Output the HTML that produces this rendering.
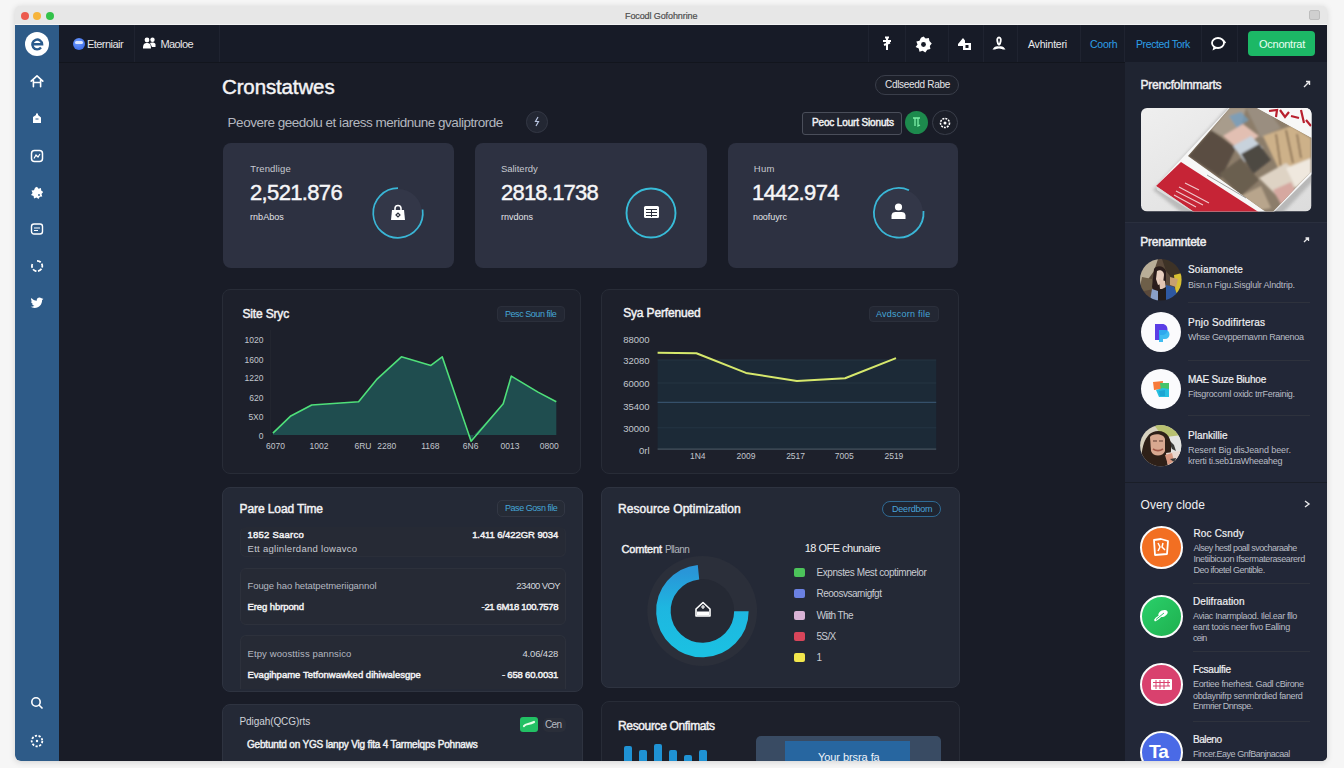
<!DOCTYPE html>
<html><head><meta charset="utf-8">
<style>
*{margin:0;padding:0;box-sizing:border-box}
html,body{width:1344px;height:768px;overflow:hidden;background:#f6f6f6;font-family:"Liberation Sans",sans-serif;position:relative}
.a{position:absolute}
.t{position:absolute;white-space:nowrap;line-height:1}
.b{font-weight:bold}
.m{-webkit-text-stroke:0.45px currentColor}
.m3{-webkit-text-stroke:0.2px currentColor}
.m2{-webkit-text-stroke:0.45px currentColor}
svg{position:absolute;overflow:visible}
#win{position:absolute;left:15px;top:6px;width:1312px;height:755px;border-radius:5px;overflow:hidden;background:#e8e8e8;box-shadow:0 1px 6px rgba(0,0,0,.15)}
.vs{position:absolute;top:25px;width:1px;height:37px;background:#1f2330}
.card{position:absolute;border-radius:8px}
</style></head><body>
<div id="win"></div>
<div class="a" style="left:0;top:0;width:1344px;height:768px;clip-path:inset(6px 17px 7px 15px round 5px)">
<!-- title bar -->
<div class="a" style="left:15px;top:6px;width:1312px;height:19px;background:#e7e7e7;border-radius:5px 5px 0 0;border-bottom:1px solid #f4f4f4"></div>
<div class="a" style="left:21px;top:11.5px;width:8px;height:8px;border-radius:50%;background:#ec5a4e"></div>
<div class="a" style="left:33px;top:11.5px;width:8px;height:8px;border-radius:50%;background:#f6b43b"></div>
<div class="a" style="left:46px;top:11.5px;width:8px;height:8px;border-radius:50%;background:#33c24a"></div>
<div class="t m3" style="left:625px;top:12px;font-size:9px;color:#4e4e4e;letter-spacing:-0.1px">Focodl Gofohnrine</div>
<div class="a" style="left:1309px;top:10px;width:11px;height:10px;border-radius:2px;background:#cfcfcf;border:1px solid #bdbdbd"></div>

<div class="a" style="left:59px;top:25px;width:1268px;height:736px;background:#191c27"></div>
<!-- sidebar -->
<div class="a" style="left:15px;top:25px;width:44px;height:736px;background:#2e5b88;border-radius:0 0 0 6px"></div>

<!-- header -->
<div class="a" style="left:59px;top:25px;width:1268px;height:38px;background:#171b27;border-bottom:1px solid #12151d"></div>
<div class="vs" style="left:134px"></div>
<div class="vs" style="left:219px"></div>
<div class="vs" style="left:868px"></div>
<div class="vs" style="left:905px"></div>
<div class="vs" style="left:948px"></div>
<div class="vs" style="left:983px"></div>
<div class="vs" style="left:1017px"></div>
<div class="vs" style="left:1080px"></div>
<div class="vs" style="left:1124px"></div>
<div class="vs" style="left:1201px"></div>
<div class="vs" style="left:1237px"></div>


<!-- sidebar content -->
<div class="a" style="left:24.5px;top:31.75px;width:24px;height:24px;border-radius:50%;background:#fff"></div>
<svg style="left:24.5px;top:31.75px" width="24" height="24" viewBox="0 0 24 24"><path d="M7.3 12.3 H17.1 A4.9 4.9 0 1 0 16 15.6" stroke="#2a5a8c" stroke-width="2.4" fill="none"/></svg>
<svg style="left:30px;top:74px" width="14" height="14" viewBox="0 0 14 14"><path d="M1.2 7.2 L7 1.8 L12.8 7.2 M3.4 6 V12.8 M10.6 6 V12.8 M3.4 8.5 H10.6" stroke="#fff" stroke-width="1.6" fill="none" stroke-linejoin="round" stroke-linecap="round"/></svg>
<svg style="left:31px;top:112px" width="12" height="12" viewBox="0 0 12 12"><path d="M2 11 V5 L5 3 V1.5 H7 V3 L10 5.5 V11 Z" fill="#fff"/><path d="M4.5 7 h3" stroke="#2e5b88" stroke-width="1"/></svg>
<svg style="left:30px;top:149px" width="14" height="14" viewBox="0 0 14 14"><rect x="1.5" y="1.5" width="11" height="11" rx="3" stroke="#fff" stroke-width="1.5" fill="none"/><path d="M4 9.5 L6 6 L8 8 L10 5" stroke="#fff" stroke-width="1.2" fill="none"/></svg>
<svg style="left:30px;top:186px" width="14" height="14" viewBox="0 0 14 14"><path d="M7 0.8 L8.5 2.8 L11 2 L11.2 4.5 L13.2 6 L11.5 8 L12.3 10.5 L9.8 10.8 L8.5 13 L6.5 11.5 L4 12.5 L3.6 10 L1 9 L2.6 7 L1.5 4.5 L4 4.2 L5 1.8 Z" fill="#fff"/><circle cx="9" cy="9" r="0.9" fill="#2e5b88"/></svg>
<svg style="left:30px;top:222px" width="14" height="14" viewBox="0 0 14 14"><rect x="1.5" y="2" width="11" height="10" rx="2.5" stroke="#fff" stroke-width="1.4" fill="none"/><path d="M4 6 H10 M4 8.5 H8" stroke="#fff" stroke-width="1.2"/></svg>
<svg style="left:30px;top:259px" width="14" height="14" viewBox="0 0 14 14"><path d="M7 1.8 A5.2 5.2 0 1 1 2.3 5" stroke="#fff" stroke-width="1.8" fill="none" stroke-dasharray="4 1.5"/></svg>
<svg style="left:30px;top:296px" width="14" height="14" viewBox="0 0 24 24"><path d="M23 4.6c-.8.4-1.7.6-2.6.7.9-.6 1.7-1.5 2-2.5-.9.5-1.9.9-2.9 1.1C18.6 3 17.4 2.5 16.1 2.5c-2.5 0-4.5 2-4.5 4.5 0 .4 0 .7.1 1C7.9 7.8 4.6 6 2.4 3.3 2 4 1.8 4.8 1.8 5.6c0 1.6.8 2.9 2 3.8-.7 0-1.4-.2-2-.6v.1c0 2.2 1.6 4 3.6 4.4-.4.1-.8.2-1.2.2-.3 0-.6 0-.8-.1.6 1.8 2.2 3.1 4.2 3.1-1.5 1.2-3.5 1.9-5.6 1.9H1c2 1.3 4.4 2 6.9 2 8.3 0 12.8-6.9 12.8-12.8v-.6c.9-.6 1.7-1.4 2.3-2.4z" fill="#fff"/></svg>
<svg style="left:30px;top:696px" width="14" height="14" viewBox="0 0 14 14"><circle cx="6" cy="6" r="4.2" stroke="#fff" stroke-width="1.6" fill="none"/><path d="M9 9 L12.5 12.5" stroke="#fff" stroke-width="1.6"/></svg>
<svg style="left:30px;top:734px" width="14" height="14" viewBox="0 0 14 14"><circle cx="7" cy="7" r="5.3" stroke="#fff" stroke-width="1.8" fill="none" stroke-dasharray="2.2 1.5"/><circle cx="7" cy="7" r="1.2" fill="#fff"/></svg>

<!-- header content -->
<div class="a" style="left:73px;top:37.5px;width:12px;height:12px;border-radius:50%;background:radial-gradient(circle at 40% 35%,#6e9cff,#2f5fe0)"></div>
<div class="a" style="left:75px;top:41px;width:8px;height:3px;border-radius:2px;background:#d8e4ff"></div>
<div class="t" id="h1" style="left:87px;top:39px;font-size:11px;color:#e6e6e8;letter-spacing:-0.55px">Eterniair</div>
<svg style="left:143px;top:37px" width="13" height="12" viewBox="0 0 13 12"><circle cx="4" cy="3" r="2.4" fill="#fff"/><circle cx="9.5" cy="2.8" r="2.2" fill="#fff"/><path d="M0 11.5 C0 7 1.5 6 4 6 C6.5 6 8 7 8 11.5 Z M7 6 C8 5.5 11 5 12.5 7 V10 H9 Z" fill="#fff"/></svg>
<div class="t" id="h2" style="left:160.5px;top:39px;font-size:11px;color:#e6e6e8;letter-spacing:-0.6px">Maoloe</div>

<svg style="left:880px;top:36px" width="14" height="15" viewBox="0 0 14 15"><path d="M7 1 V14 M3 5 H11 M4 9 L10 6.5 M5 1.5 L9 1.5" stroke="#fff" stroke-width="2" fill="none"/></svg>
<svg style="left:915px;top:35.5px" width="17" height="17" viewBox="0 0 14 14"><path d="M7 0.4 L8.8 2.1 L11.4 1.6 L11.9 4.2 L13.8 6.1 L12.2 8.2 L12.7 10.8 L10.1 11.3 L8.5 13.6 L6.3 12.1 L3.7 12.9 L3.1 10.3 L0.5 9.1 L2.1 7 L1.1 4.5 L3.7 3.9 L4.9 1.5 Z" fill="#fff"/><circle cx="7" cy="7" r="2" fill="#171b27"/></svg>
<svg style="left:957px;top:36px" width="15" height="15" viewBox="0 0 15 15"><path d="M1 8 L6 2 L8 4.5 V7 H14 V14 H6 V10 H1 Z" fill="#fff"/><rect x="8.5" y="9" width="3" height="3" fill="#161922"/></svg>
<svg style="left:991px;top:36px" width="16" height="15" viewBox="0 0 16 15"><path d="M8 1.5 C6.5 1.5 6 3 6.3 5 C6.6 7 7.5 8.5 8 9" stroke="#fff" stroke-width="1.8" fill="none"/><path d="M8 1.5 C9.5 1.5 10 3 9.7 5 C9.4 7 8.5 8.5 8 9" stroke="#fff" stroke-width="1.8" fill="none"/><path d="M1.5 13.5 C3 10.5 5.5 9.5 8 10.5 C10.5 9.5 13 10.5 14.5 13.5 C12 14 10 12.5 8 12.5 C6 12.5 4 14 1.5 13.5 Z" fill="#fff"/></svg>
<div class="t" id="h3" style="left:1028px;top:38.5px;font-size:10.5px;color:#ececee;letter-spacing:-0.19px">Avhinteri</div>
<div class="t" id="h4" style="left:1090px;top:38.5px;font-size:10.5px;color:#2d9fe8;letter-spacing:-0.26px">Coorh</div>
<div class="t" id="h5" style="left:1136px;top:38.5px;font-size:10.5px;color:#2d9fe8;letter-spacing:-0.4px">Prected Tork</div>
<svg style="left:1210px;top:35.5px" width="17" height="16" viewBox="0 0 17 16"><ellipse cx="8" cy="7" rx="6" ry="5" stroke="#fff" stroke-width="1.8" fill="none"/><path d="M3.5 11 L2.5 14.5 L7 12.2" fill="#fff"/><path d="M13 4 L15.5 7" stroke="#fff" stroke-width="1.5"/></svg>
<div class="a" style="left:1248px;top:30.8px;width:67px;height:25px;border-radius:4px;background:#1cb866"></div>
<div class="t" id="h6" style="left:1259px;top:38.5px;font-size:11px;color:#eafff2;letter-spacing:-0.26px">Ocnontrat</div>

<!-- main title area -->
<div class="t m" id="m1" style="left:222px;top:77.4px;font-size:20.5px;color:#f4f4f6;letter-spacing:-0.13px">Cronstatwes</div>
<div class="t" id="m2" style="left:227.6px;top:116.1px;font-size:13.5px;color:#b3b7bf;letter-spacing:-0.49px">Peovere geedolu et iaress meridnune gvaliptrorde</div>
<div class="a" style="left:526.3px;top:111.3px;width:21.4px;height:21.4px;border-radius:50%;background:#232733;border:1px solid #343845"></div>
<svg style="left:532px;top:116px" width="10" height="11" viewBox="0 0 10 11"><path d="M6 1 L3.5 5.5 H6.5 L4 10" stroke="#b8c4e0" stroke-width="1.2" fill="none"/></svg>
<div class="a" style="left:875px;top:75px;width:84px;height:19.5px;border-radius:10px;background:#1c1f29;border:1px solid #3a3e4a"></div>
<div class="t" id="m3" style="left:885px;top:80px;font-size:10px;color:#e4e4e8;letter-spacing:-0.3px">Cdlseedd Rabe</div>
<div class="a" style="left:802px;top:111.6px;width:100px;height:23px;border-radius:3px;background:#20232e;border:1px solid #4a4e5a"></div>
<div class="t m" id="m4" style="left:812px;top:118px;font-size:10px;color:#f0f0f2;letter-spacing:-0.15px">Peoc Lourt Sionuts</div>
<div class="a" style="left:904.8px;top:110.8px;width:23.6px;height:23.6px;border-radius:50%;background:#1d8a4d"></div>
<svg style="left:911px;top:116px" width="11" height="12" viewBox="0 0 11 12"><path d="M2 2 H9 M4 2 V10 M7 2 V10 L9 9" stroke="#7df0a8" stroke-width="1.3" fill="none"/></svg>
<div class="a" style="left:932.3px;top:109.9px;width:25.4px;height:25.4px;border-radius:50%;background:#1b1e28;border:1px solid #3a3e4a"></div>
<svg style="left:939px;top:117px" width="12" height="12" viewBox="0 0 12 12"><circle cx="6" cy="6" r="4.5" stroke="#fff" stroke-width="1.6" fill="none" stroke-dasharray="2 1"/><circle cx="6" cy="6" r="1.5" fill="#fff"/></svg>


<!-- stat cards -->
<div class="card" style="left:222.8px;top:143.4px;width:231.2px;height:124.2px;background:#2d3141"></div>
<div class="card" style="left:475.2px;top:143.4px;width:231.6px;height:124.2px;background:#2d3141"></div>
<div class="card" style="left:727.6px;top:143.4px;width:230.1px;height:124.2px;background:#2d3141"></div>

<div class="t" id="s1a" style="left:250.3px;top:164.2px;font-size:9.5px;color:#c6c9d0;letter-spacing:0.15px">Trendlige</div>
<div class="t m2" id="s1b" style="left:250px;top:181.9px;font-size:22px;color:#f6f6f8;letter-spacing:-0.65px">2,521.876</div>
<div class="t" id="s1c" style="left:250px;top:212.5px;font-size:9px;color:#e2e4e8;letter-spacing:0.04px">rnbAbos</div>
<div class="t" id="s2a" style="left:500.9px;top:164.2px;font-size:9.5px;color:#c6c9d0;letter-spacing:0.0px">Saliterdy</div>
<div class="t m2" id="s2b" style="left:501px;top:181.9px;font-size:22px;color:#f6f6f8;letter-spacing:-0.78px">2818.1738</div>
<div class="t" id="s2c" style="left:501px;top:212.5px;font-size:9px;color:#e2e4e8;letter-spacing:-0.0px">rnvdons</div>
<div class="t" id="s3a" style="left:753.7px;top:164.2px;font-size:9.5px;color:#c6c9d0;letter-spacing:0.38px">Hum</div>
<div class="t m2" id="s3b" style="left:752px;top:181.9px;font-size:22px;color:#f6f6f8;letter-spacing:-0.6px">1442.974</div>
<div class="t" id="s3c" style="left:753px;top:212.5px;font-size:9px;color:#e2e4e8;letter-spacing:-0.07px">noofuyrc</div>

<svg style="left:371.8px;top:186.75px" width="52" height="52" viewBox="0 0 52 52"><circle cx="26" cy="26" r="24" fill="#333748"/><path d="M26 1.2 A24.8 24.8 0 1 0 50.56 22.5" stroke="#3ab6d6" stroke-width="1.7" fill="none"/></svg>
<svg style="left:389.5px;top:203.5px" width="16" height="17" viewBox="0 0 16 17"><path d="M5 6 V4.5 A3 3 0 0 1 11 4.5 V6" stroke="#fff" stroke-width="1.6" fill="none"/><path d="M2 6 H14 L15 16 H1 Z" fill="#fff"/><path d="M6 11 L8 9 L10 11 L8 13 Z" stroke="#2b2f3c" stroke-width="1.2" fill="none"/></svg>
<svg style="left:625px;top:186.75px" width="52" height="52" viewBox="0 0 52 52"><circle cx="26" cy="26" r="24.5" fill="#333748" stroke="#38bcd8" stroke-width="1.9"/></svg>
<svg style="left:643px;top:205px" width="17" height="15" viewBox="0 0 17 15"><rect x="1" y="1" width="15" height="12" rx="1.5" fill="#fff"/><path d="M3 4.5 H14 M3 7.5 H14 M3 10.5 H14 M8.5 4 V12" stroke="#2b2f3c" stroke-width="1"/></svg>
<svg style="left:873px;top:186.75px" width="52" height="52" viewBox="0 0 52 52"><circle cx="26" cy="26" r="24" fill="#333748"/><path d="M36 3.2 A24.8 24.8 0 1 0 50.5 24" stroke="#3ab6d6" stroke-width="1.8" fill="none"/></svg>
<svg style="left:890px;top:202px" width="17" height="18" viewBox="0 0 17 18"><circle cx="8.5" cy="5" r="3.6" fill="#fff"/><path d="M1.5 17 V13.5 C1.5 11 3.5 10 5.5 10 H11.5 C13.5 10 15.5 11 15.5 13.5 V17 Z" fill="#fff"/></svg>

<!-- chart cards -->
<div class="card" style="left:222.4px;top:288.8px;width:358.6px;height:185.5px;background:#1d202b;border:1px solid #282c37"></div>
<div class="card" style="left:601.4px;top:288.8px;width:358.1px;height:185.5px;background:#1d202b;border:1px solid #282c37"></div>
<div class="t m" id="c1t" style="left:242.5px;top:307.8px;font-size:12px;color:#f2f2f4;letter-spacing:-0.17px">Site Sryc</div>
<div class="a" style="left:496.5px;top:305.5px;width:68px;height:16px;border-radius:4px;background:#232733;border:1px solid #2b2f3b"></div>
<div class="t" id="c1b" style="left:505px;top:309.5px;font-size:9px;color:#45a6d6;letter-spacing:-0.45px">Pesc Soun file</div>
<div class="t m" id="c2t" style="left:623.2px;top:307.1px;font-size:12px;color:#f2f2f4;letter-spacing:-0.16px">Sya Perfenued</div>
<div class="a" style="left:868.7px;top:306px;width:70.5px;height:16px;border-radius:4px;background:#232733;border:1px solid #2b2f3b"></div>
<div class="t" id="c2b" style="left:876px;top:310px;font-size:9px;color:#45a6d6;letter-spacing:0.24px">Avdscorn file</div>

<div class="a" style="left:270px;top:330px;width:1px;height:106px;background:#22252f"></div>
<svg style="left:0;top:0" width="1344" height="768">
  <path d="M272.9 433.1 L290.3 416.3 L311.7 405 L358.6 401.8 L377.3 378.8 L401.4 356.8 L430.9 365.4 L442.2 356.8 L468 435 L471.1 441.2 L474 435 L503.2 403.7 L511.3 376.1 L538 392.1 L556.3 401.8 L556.3 435 L272.9 435 Z" fill="#1f4d4f"/>
  <path d="M272.9 433.1 L290.3 416.3 L311.7 405 L358.6 401.8 L377.3 378.8 L401.4 356.8 L430.9 365.4 L442.2 356.8 L471.1 441.2 L503.2 403.7 L511.3 376.1 L538 392.1 L556.3 401.8" stroke="#4fe07a" stroke-width="1.6" fill="none" stroke-linejoin="round"/>
  <rect x="657.6" y="360" width="278.6" height="89.2" fill="#1c2a37"/>
  <path d="M657.6 360 H936.2 M657.6 383 H936.2 M657.6 427.8 H936.2" stroke="#243543" stroke-width="1"/>
  <path d="M657.6 402.3 H936.2" stroke="#35506a" stroke-width="1.3"/>
  <path d="M657.6 449.2 H936.2" stroke="#45525e" stroke-width="1.2"/>
  <path d="M657.6 352.8 L696.4 353.3 L746 372.9 L796.9 380.9 L845.1 378.2 L896 358.1" stroke="#d6e86c" stroke-width="2" fill="none" stroke-linejoin="round"/>
</svg>
<div class="a" style="left:232px;top:336px;width:31.5px;font-size:8.5px;color:#c2c6cd;line-height:1;text-align:right">
 <div class="t" style="right:0;top:0.4px">1020</div>
 <div class="t" style="right:0;top:19.7px">1600</div>
 <div class="t" style="right:0;top:38.4px">1220</div>
 <div class="t" style="right:0;top:57.7px">620</div>
 <div class="t" style="right:0;top:76.5px">5X0</div>
 <div class="t" style="right:0;top:96px">0</div>
</div>

<div class="t" style="left:275.5px;top:442.4px;font-size:8.5px;color:#c2c6cd;transform:translateX(-50%)">6070</div>
<div class="t" style="left:319px;top:442.4px;font-size:8.5px;color:#c2c6cd;transform:translateX(-50%)">1002</div>
<div class="t" style="left:363px;top:442.4px;font-size:8.5px;color:#c2c6cd;transform:translateX(-50%)">6RU</div>
<div class="t" style="left:386.7px;top:442.4px;font-size:8.5px;color:#c2c6cd;transform:translateX(-50%)">2280</div>
<div class="t" style="left:430.4px;top:442.4px;font-size:8.5px;color:#c2c6cd;transform:translateX(-50%)">1168</div>
<div class="t" style="left:470.6px;top:442.4px;font-size:8.5px;color:#c2c6cd;transform:translateX(-50%)">6N6</div>
<div class="t" style="left:510px;top:442.4px;font-size:8.5px;color:#c2c6cd;transform:translateX(-50%)">0013</div>
<div class="t" style="left:549.3px;top:442.4px;font-size:8.5px;color:#c2c6cd;transform:translateX(-50%)">0800</div>
<div class="t" style="left:697.8px;top:452.29999999999995px;font-size:8.5px;color:#c2c6cd;transform:translateX(-50%)">1N4</div>
<div class="t" style="left:746px;top:452.29999999999995px;font-size:8.5px;color:#c2c6cd;transform:translateX(-50%)">2009</div>
<div class="t" style="left:795.6px;top:452.29999999999995px;font-size:8.5px;color:#c2c6cd;transform:translateX(-50%)">2517</div>
<div class="t" style="left:844.3px;top:452.29999999999995px;font-size:8.5px;color:#c2c6cd;transform:translateX(-50%)">7005</div>
<div class="t" style="left:893.9px;top:452.29999999999995px;font-size:8.5px;color:#c2c6cd;transform:translateX(-50%)">2519</div>
<div class="a" style="left:600px;top:334.8px;width:49.6px;font-size:9.5px;color:#c2c6cd;line-height:1">
 <div class="t" style="right:0;top:0">88000</div>
 <div class="t" style="right:0;top:21.4px">32080</div>
 <div class="t" style="right:0;top:44.2px">60000</div>
 <div class="t" style="right:0;top:66.9px">35400</div>
 <div class="t" style="right:0;top:89.2px">30000</div>
 <div class="t" style="right:0;top:111.1px">0rl</div>
</div>


<!-- row 3 -->
<div class="card" style="left:221.7px;top:486.7px;width:361.3px;height:205.3px;background:#242936;border:1px solid #2e3340"></div>
<div class="t m" id="r1t" style="left:239.5px;top:502.5px;font-size:12px;color:#f2f2f4;letter-spacing:-0.09px">Pare Load Time</div>
<div class="a" style="left:497px;top:500px;width:68px;height:16.5px;border-radius:5px;background:#262b36;border:1px solid #323744"></div>
<div class="t" id="r1b" style="left:505px;top:504.2px;font-size:9px;color:#45a6d6;letter-spacing:-0.45px">Pase Gosn file</div>

<div class="a" style="left:240px;top:527px;width:326px;height:30.2px;border-radius:6px;background:#262a35;border:1px solid #2a2e39;border-top-color:transparent"></div>
<div class="t m" id="p1a" style="left:247.5px;top:529.7px;font-size:9.5px;color:#f2f2f4;letter-spacing:0.24px">1852 Saarco</div>
<div class="t" id="p1b" style="left:247.5px;top:543.8px;font-size:9.5px;color:#c6c9d0;letter-spacing:0.29px">Ett aglinlerdand lowavco</div>
<div class="t m" id="p1c" style="right:785.8px;top:529.7px;font-size:9.5px;color:#f2f2f4;letter-spacing:-0.08px">1.411 6/422GR 9034</div>

<div class="a" style="left:240px;top:568.2px;width:326px;height:57px;border-radius:6px;background:#262a35;border:1px solid #2d313c"></div>
<div class="t" id="p2a" style="left:247.5px;top:581.4px;font-size:9.5px;color:#b4b8c0;letter-spacing:-0.09px">Fouge hao hetatpetmeriigannol</div>
<div class="t m" id="p2b" style="left:247.5px;top:602.4px;font-size:9.5px;color:#f2f2f4;letter-spacing:-0.09px">Ereg hbrpond</div>
<div class="t" id="p2c" style="right:784px;top:581.4px;font-size:9.5px;color:#d4d7dd;letter-spacing:-0.61px">23400 VOY</div>
<div class="t m" id="p2d" style="right:785.8px;top:602.4px;font-size:9.5px;color:#f2f2f4;letter-spacing:-0.34px">-21 6M18 100.7578</div>

<div class="a" style="left:240px;top:635px;width:326px;height:54px;border-radius:6px 6px 0 0;background:#262a35;border:1px solid #2d313c;border-bottom:none"></div>
<div class="t" id="p3a" style="left:247.5px;top:649.4px;font-size:9.5px;color:#b4b8c0;letter-spacing:0.11px">Etpy woosttiss pannsico</div>
<div class="t m" id="p3b" style="left:247.5px;top:669.6px;font-size:9.5px;color:#f2f2f4;letter-spacing:0.01px">Evagihpame Tetfonwawked dihiwalesgpe</div>
<div class="t" id="p3c" style="right:785.8px;top:649.4px;font-size:9.5px;color:#d4d7dd;letter-spacing:-0.15px">4.06/428</div>
<div class="t m" id="p3d" style="right:785.8px;top:669.6px;font-size:9.5px;color:#f2f2f4;letter-spacing:-0.18px">- 658 60.0031</div>

<div class="card" style="left:600.7px;top:487.2px;width:359px;height:200.5px;background:#242936;border:1px solid #2e3340"></div>
<div class="t m" id="r2t" style="left:618px;top:503.4px;font-size:12px;color:#f2f2f4;letter-spacing:0.06px">Resource Optimization</div>
<div class="a" style="left:882px;top:501px;width:59.3px;height:15.5px;border-radius:8px;background:#1f2430;border:1px solid #2f6a94"></div>
<div class="t" id="r2b" style="left:892px;top:504.8px;font-size:9px;color:#4aa3d8;letter-spacing:-0.2px">Deerdbom</div>
<div class="t m" id="r2c" style="left:621.4px;top:543.5px;font-size:11px;color:#f0f0f2;letter-spacing:-0.14px">Comtent <span style="color:#b0b4bc;-webkit-text-stroke:0;font-size:10px;letter-spacing:-0.6px">Pllann</span></div>
<svg style="left:0;top:0" width="1344" height="768">
  <defs><linearGradient id="dg" x1="0" y1="0" x2="0" y2="1"><stop offset="0" stop-color="#2996d8"/><stop offset=".45" stop-color="#1eb6e0"/><stop offset="1" stop-color="#1bc0e2"/></linearGradient></defs>
  <circle cx="702.2" cy="611" r="54.9" fill="#2b2f3a"/>
  <circle cx="702.2" cy="611" r="32" fill="#252934"/>
  <path d="M698.5 572.2 A39 39 0 1 0 741.4 611.2" stroke="url(#dg)" stroke-width="14.5" fill="none"/>
</svg>
<svg style="left:693.5px;top:600px" width="18" height="18" viewBox="0 0 18 18"><path d="M2 9 L9 2.5 L16 9 V16 H2 Z" stroke="#fff" stroke-width="1.6" fill="none" stroke-linejoin="round"/><rect x="3" y="11.5" width="12" height="4" fill="#fff"/><path d="M9 5 V9 M7 7 H11" stroke="#fff" stroke-width="1.2"/></svg>
<div class="t" id="r2d" style="left:804.7px;top:542.8px;font-size:11px;color:#f0f0f2;letter-spacing:-0.51px">18 OFE chunaire</div>
<div class="a" style="left:794px;top:567.9px;width:11px;height:9px;border-radius:2px;background:#4cc35a"></div>
<div class="a" style="left:794px;top:589.4px;width:11px;height:9px;border-radius:2px;background:#6a80e2"></div>
<div class="a" style="left:794px;top:610.9px;width:11px;height:9px;border-radius:2px;background:#d8b2d5"></div>
<div class="a" style="left:794px;top:632.2px;width:11px;height:9px;border-radius:2px;background:#d8455a"></div>
<div class="a" style="left:794px;top:653.2px;width:11px;height:9px;border-radius:2px;background:#f2e64c"></div>
<div class="t" id="l1" style="left:816.4px;top:567.6px;font-size:10px;color:#c9ccd3;letter-spacing:-0.4px">Expnstes Mest coptimnelor</div>
<div class="t" id="l2" style="left:816.4px;top:589.1px;font-size:10px;color:#c9ccd3;letter-spacing:-0.48px">Reoosvsarnigfgt</div>
<div class="t" id="l3" style="left:816.4px;top:610.6px;font-size:10px;color:#c9ccd3;letter-spacing:-0.61px">Wiith The</div>
<div class="t" id="l4" style="left:816.4px;top:631.9px;font-size:10px;color:#c9ccd3;letter-spacing:-0.6px">5S/X</div>
<div class="t" id="l5" style="left:816.4px;top:652.9px;font-size:10px;color:#c9ccd3">1</div>

<!-- row 4 -->
<div class="card" style="left:221.7px;top:704px;width:361px;height:70px;background:#242936;border:1px solid #2e3340"></div>
<div class="t" id="q1t" style="left:239.5px;top:717px;font-size:10px;color:#d0d3d9;letter-spacing:-0.08px">Pdigah(QCG)rts</div>
<div class="t m" id="q1b" style="left:247px;top:740px;font-size:10px;color:#eef0f2;letter-spacing:-0.18px">Gebtuntd on YGS lanpy Vig fita 4 Tarmelqps Pohnaws</div>
<div class="a" style="left:520px;top:716.5px;width:18px;height:15.5px;border-radius:3px;background:#22c064"></div>
<svg style="left:522px;top:719px" width="14" height="11" viewBox="0 0 14 11"><path d="M2 7 C4 4 7 6 12 3" stroke="#e8ffe8" stroke-width="2.2" fill="none" stroke-linecap="round"/></svg>
<div class="a" style="left:542.5px;top:717.9px;width:23.2px;height:14.1px;border-radius:5px;background:#2a2e39"></div>
<div class="t" id="q1c" style="left:545px;top:720.3px;font-size:10px;color:#b9bcc4;letter-spacing:-0.65px">Cen</div>

<div class="card" style="left:601.2px;top:701px;width:358.5px;height:70px;background:#1d202b;border:1px solid #282c37"></div>
<div class="t m" id="q2t" style="left:618px;top:720.2px;font-size:12px;color:#f2f2f4;letter-spacing:-0.35px">Resource Onfimats</div>
<div class="a" style="left:624px;top:746.3px;width:8.2px;height:16px;border-radius:2px 2px 0 0;background:#1f92d4"></div>
<div class="a" style="left:639px;top:750.4px;width:8.2px;height:12px;border-radius:2px 2px 0 0;background:#1f92d4"></div>
<div class="a" style="left:654px;top:744.1px;width:8.2px;height:18px;border-radius:2px 2px 0 0;background:#1f92d4"></div>
<div class="a" style="left:669px;top:750.4px;width:8.2px;height:12px;border-radius:2px 2px 0 0;background:#1f92d4"></div>
<div class="a" style="left:684px;top:754.5px;width:8.2px;height:8px;border-radius:2px 2px 0 0;background:#1f92d4"></div>
<div class="a" style="left:699px;top:750.4px;width:8.2px;height:12px;border-radius:2px 2px 0 0;background:#1f92d4"></div>
<div class="a" style="left:756.3px;top:736.3px;width:185px;height:30px;border-radius:5px;background:#394b63"></div>
<div class="a" style="left:785.4px;top:741.4px;width:125px;height:25px;background:#2766a0"></div>
<div class="t" id="q2b" style="left:818px;top:752px;font-size:11px;color:#eef4fa;letter-spacing:-0.07px">Your brsra fa</div>

<!-- right panel -->
<div class="a" style="left:1125px;top:62px;width:202px;height:699px;background:#222737;border-radius:0 0 6px 0"></div>
<div class="a" style="left:1125px;top:62px;width:202px;height:160px;background:#1f2431"></div>
<div class="t m" id="rp1" style="left:1140.4px;top:78.6px;font-size:12px;color:#f0f0f2;letter-spacing:-0.22px">Prencfolmmarts</div>
<svg style="left:1303px;top:80px" width="8" height="8" viewBox="0 0 8 8"><path d="M1 7 L6 2 M3 1.5 H6.5 V5" stroke="#e8e8ea" stroke-width="1.4" fill="none"/></svg>
<svg style="left:1140.9px;top:108px" width="170.5" height="103.5" viewBox="0 0 170.5 103.5">
  <defs>
    <clipPath id="ic"><rect x="0" y="0" width="170.5" height="103.5" rx="6"/></clipPath>
    <linearGradient id="bgi" x1="0" y1="0" x2="1" y2="1"><stop offset="0" stop-color="#efefef"/><stop offset="1" stop-color="#dcdcdc"/></linearGradient>
    <filter id="bl"><feGaussianBlur stdDeviation="0.8"/></filter>
    <filter id="bl2"><feGaussianBlur stdDeviation="1.5"/></filter>
    <clipPath id="pc"><path d="M47 48 L88.8 0 L116 0 L170.5 29.7 L170.5 63.3 L131.8 104 L125 104 Z"/></clipPath>
  </defs>
  <g clip-path="url(#ic)">
    <rect width="170.5" height="103.5" fill="url(#bgi)"/>
    <path d="M12 82 L88 -2 L175 -2 L175 70 L135 112 L50 112 Z" fill="#8a8a8a" opacity=".45" filter="url(#bl2)"/>
    <path d="M15 78 L88.8 -1 L171 -1 L171 66 L133 104 L53 104 Z" fill="#f7f7f7"/>
    <path d="M15 78 L40 54 L117.5 104 L53 104 Z" fill="#c62436"/>
    <path d="M15 78 L16 82 L52 104 L53 104 Z" fill="#dcdcdc"/>
    <g clip-path="url(#pc)">
      <rect x="40" y="0" width="135" height="105" fill="#8c7d6a"/>
      <g filter="url(#bl)">
        <path d="M47 48 L70 22 L95 40 L80 70 Z" fill="#5a4e42"/>
        <path d="M70 22 L88 0 L105 0 L100 18 L85 30 Z" fill="#a89c8c"/>
        <path d="M88 8 L100 4 L108 12 L96 20 Z" fill="#6ea0c8" opacity=".7"/>
        <path d="M82 28 L102 16 L118 28 L98 42 Z" fill="#e2bfb2"/>
        <path d="M92 38 L110 28 L122 40 L104 54 Z" fill="#c8d2dc"/>
        <path d="M100 46 L118 36 L130 52 L112 66 Z" fill="#4e4842"/>
        <path d="M78 66 L100 50 L118 72 L100 88 Z" fill="#6a5e50"/>
        <path d="M105 0 L125 0 L140 20 L120 30 Z" fill="#9a8e80"/>
        <path d="M122 28 L150 18 L170 30 L170 50 L140 66 Z" fill="#cdb189"/>
        <path d="M135 26 L140 60 M145 22 L152 55 M156 26 L160 50" stroke="#7a6248" stroke-width="1.5"/>
        <path d="M118 70 L145 55 L165 70 L140 92 Z" fill="#ded3c4"/>
        <path d="M132 82 L150 74 L158 90 L142 100 Z" fill="#d6a8a0"/>
        <path d="M145 60 L170 50 L170 66 L155 80 Z" fill="#efe8de"/>
        <path d="M100 88 L120 78 L130 100 L110 104 Z" fill="#b8a58c"/>
      </g>
    </g>
    <path d="M116 0 L170.5 0 L170.5 29.7 Z" fill="#f7f7f7"/>
    <path d="M128 3 L136 2 L135 9 M139 2 L144 9 L148 4 M150 8 L158 10 M160 2 L163 15 M165 12 L170 18" stroke="#b81f2e" stroke-width="2.2" fill="none"/>
    <path d="M44 75 L58 82 M38 79 L68 95 M35 83 L62 97 M33 87 L55 99" stroke="#f0c8cc" stroke-width="1.1"/>
    <path d="M66 67 L105 90" stroke="#777" stroke-width=".7"/>
  </g>
</svg>
<div class="a" style="left:1125px;top:222px;width:202px;height:1px;background:#2a2f3e"></div>

<div class="t m" id="rp2" style="left:1140.3px;top:235.6px;font-size:12px;color:#f0f0f2;letter-spacing:-0.27px">Prenamntete</div>
<svg style="left:1303px;top:237px" width="7" height="7" viewBox="0 0 7 7"><path d="M1 5 L5 1 M2.5 1 H5.5 V4" stroke="#e8e8ea" stroke-width="1.3" fill="none"/></svg>

<svg style="left:1139.9px;top:258.9px" width="41.6" height="41.6" viewBox="0 0 41.6 41.6"><defs><clipPath id="a1"><circle cx="20.8" cy="20.8" r="20.8"/></clipPath><filter id="a1b"><feGaussianBlur stdDeviation="0.7"/></filter></defs><g clip-path="url(#a1)"><g filter="url(#a1b)">
<rect width="42" height="42" fill="#5a4a3a"/>
<path d="M0 0 H18 L14 12 L4 26 L0 28 Z" fill="#b9ae98"/>
<path d="M2 18 L12 20 L14 30 L4 32 L0 28 Z" fill="#6e5e48"/>
<path d="M22 0 H42 V20 L34 22 L26 12 Z" fill="#3e3026"/>
<path d="M34 16 L42 14 V34 L36 38 Z" fill="#d8c030"/>
<path d="M30 18 L38 20 L36 28 L30 26 Z" fill="#c8a070"/>
<path d="M14 10 C16 6 24 6 26 12 L26 34 L16 38 L12 28 Z" fill="#2a1f1a"/>
<path d="M17 12 C20 10 24 12 24 16 L23 24 L18 26 L16 20 Z" fill="#e8cfc0"/>
<path d="M19 20 L25 22 L26 30 L20 30 Z" fill="#e2c4b2"/>
<path d="M26 26 L34 28 L40 42 H24 Z" fill="#2f58a0"/>
<path d="M12 30 L18 32 L20 42 H10 Z" fill="#8aa0c8"/>
<path d="M18 32 L26 28 L26 42 H18 Z" fill="#221c1c"/>
</g></g></svg>
<div class="t m3" id="i1a" style="left:1188px;top:265.3px;font-size:10px;color:#f0f0f2;letter-spacing:0.16px">Soiamonete</div>
<div class="t" id="i1b" style="left:1188px;top:280.5px;font-size:9px;color:#b8bcc4;letter-spacing:-0.17px">Bisn.n Figu.Sisglulr Alndtrip.</div>
<div class="a" style="left:1188px;top:302px;width:122px;height:1px;background:#2e323d"></div>

<div class="a" style="left:1140.6px;top:312px;width:40px;height:40px;border-radius:50%;background:#fbfbfd"></div>
<svg style="left:1152px;top:322px" width="18" height="20" viewBox="0 0 18 20"><path d="M3 2 H10 C14 2 15.5 4.5 15.5 7.5 C15.5 11 13 13 10 13 H8 V18 H3 Z" fill="#5b3ee6"/><path d="M7 8 H13 C16 8 17.5 10 17.5 12.5 C17.5 15 15.5 17 13 17 H11 V20 H7 Z" fill="#2ab5ee" opacity=".9"/></svg>
<div class="t m3" id="i2a" style="left:1188px;top:317.5px;font-size:10px;color:#f0f0f2;letter-spacing:0.23px">Pnjo Sodifirteras</div>
<div class="t" id="i2b" style="left:1188px;top:332.8px;font-size:9px;color:#b8bcc4;letter-spacing:-0.32px">Whse Gevppernavnn Ranenoa</div>
<div class="a" style="left:1188px;top:360.2px;width:122px;height:1px;background:#2e323d"></div>

<div class="a" style="left:1141px;top:369.3px;width:40px;height:40px;border-radius:50%;background:#fbfbfd"></div>
<svg style="left:1151px;top:379px" width="20" height="20" viewBox="0 0 20 20"><path d="M2 3 L12 2 L11 10 L3 11 Z" fill="#f77a3a"/><path d="M9 4 H18 V10 L10 12 Z" fill="#46c46a"/><path d="M5 11 L12 9 L18 10 V18 H8 Z" fill="#26bfe0"/><path d="M8 12 L14 11 V17 H9 Z" fill="#1a9fd0" opacity=".8"/></svg>
<div class="t m3" id="i3a" style="left:1188px;top:375.1px;font-size:10px;color:#f0f0f2;letter-spacing:-0.21px">MAE Suze Biuhoe</div>
<div class="t" id="i3b" style="left:1188px;top:389.7px;font-size:9px;color:#b8bcc4;letter-spacing:-0.31px">Fitsgrocoml oxidc trrFerainig.</div>
<div class="a" style="left:1188px;top:415.2px;width:122px;height:1px;background:#2e323d"></div>

<svg style="left:1140px;top:425.3px" width="41.4" height="41.4" viewBox="0 0 41.4 41.4"><defs><clipPath id="a4"><circle cx="20.7" cy="20.7" r="20.6"/></clipPath></defs><g clip-path="url(#a4)">
<rect width="42" height="42" fill="#d8d2c0"/>
<path d="M14 0 H42 V12 L28 14 L20 8 Z" fill="#b8c070"/>
<path d="M26 12 L42 10 V28 L32 30 Z" fill="#e4e4e2"/>
<path d="M28 14 L34 20 L36 26 L32 24 Z" fill="#3a3a38"/>
<path d="M2 42 C0 26 4 6 18 6 C28 6 32 14 31 26 L28 42 Z" fill="#2e2018"/>
<path d="M10 12 C12 8 24 8 25 14 L25 26 C23 32 13 32 11 26 Z" fill="#d8a890"/>
<path d="M13 24 C16 26 20 26 23 24" stroke="#a05848" stroke-width="1.6" fill="none"/>
<path d="M13 16 H17 M19 16 H23" stroke="#5a3a30" stroke-width="1"/>
<path d="M26 28 L40 26 L42 42 H28 Z" fill="#e8d8d0"/>
<path d="M25 30 L32 28 L34 36 L28 40 Z" fill="#d89880"/>
<path d="M30 34 L36 33 L35 38 Z" fill="#3a3a3a"/>
</g></svg>
<div class="t m3" id="i4a" style="left:1188px;top:430.5px;font-size:10px;color:#f0f0f2;letter-spacing:0.02px">Plankillie</div>
<div class="t" id="i4b" style="left:1188px;top:445.9px;font-size:9px;color:#b8bcc4;letter-spacing:-0.09px">Resent Big disJeand beer.</div>
<div class="t" id="i4c" style="left:1188px;top:457.1px;font-size:9px;color:#b8bcc4;letter-spacing:-0.26px">krerti ti.seb1raWheeaheg</div>
<div class="a" style="left:1125px;top:481.5px;width:202px;height:1px;background:#1a1e28"></div>

<div class="t" id="rp3" style="left:1140.6px;top:498.8px;font-size:12px;color:#f0f0f2;letter-spacing:0.03px">Overy clode</div>
<svg style="left:1304px;top:500px" width="6" height="8" viewBox="0 0 6 8"><path d="M1 1 L5 4 L1 7" stroke="#e8e8ea" stroke-width="1.4" fill="none"/></svg>

<div class="a" style="left:1139.5px;top:525.5px;width:43px;height:43px;border-radius:50%;background:#f26f22;border:2.2px solid #fbfbfb"></div>
<svg style="left:1151px;top:537px" width="20" height="20" viewBox="0 0 20 20"><path d="M3 3 L10 2 L17 4 L16 17 L4 18 Z" stroke="#fff" stroke-width="1.8" fill="none" stroke-linejoin="round"/><path d="M7 6 L9 10 L7 14 M12 6 L11 10 L14 13" stroke="#fff" stroke-width="1.5" fill="none"/></svg>
<div class="t m3" id="j1a" style="left:1193.4px;top:528.9px;font-size:10px;color:#f0f0f2;letter-spacing:0.17px">Roc Csndy</div>
<div class="t" id="j1b" style="left:1193.4px;top:543.7px;font-size:9px;color:#b8bcc4;letter-spacing:-0.54px">Alsey hestl poall svocharaahe</div>
<div class="t" id="j1c" style="left:1193.4px;top:555.2px;font-size:9px;color:#b8bcc4;letter-spacing:-0.41px">Inetiibicuon Ifsermaterasearerd</div>
<div class="t" id="j1d" style="left:1193.4px;top:566.3px;font-size:9px;color:#b8bcc4;letter-spacing:-0.49px">Deo ifoetel Gentible.</div>
<div class="a" style="left:1193px;top:583px;width:117px;height:1px;background:#2e323d"></div>

<div class="a" style="left:1139.5px;top:594.5px;width:43px;height:43px;border-radius:50%;background:linear-gradient(135deg,#2ad06a,#1fb04f);border:2.2px solid #fbfbfb"></div>
<svg style="left:1150px;top:605px" width="22" height="22" viewBox="0 0 22 22"><ellipse cx="13" cy="8.5" rx="5" ry="3.2" transform="rotate(-25 13 8.5)" fill="#fff"/><path d="M4 15 C6 11 10 10 13 10 C11 13 8 15 5 16.5 Z" fill="#fff"/><path d="M6 14.5 L14 8" stroke="#2bc46a" stroke-width="1"/></svg>
<div class="t m3" id="j2a" style="left:1193px;top:597.3px;font-size:10px;color:#f0f0f2;letter-spacing:0.09px">Delifraation</div>
<div class="t" id="j2b" style="left:1193px;top:612.3px;font-size:9px;color:#b8bcc4;letter-spacing:-0.37px">Aviac Inarmplaod. Ilel.ear fllo</div>
<div class="t" id="j2c" style="left:1193px;top:622.7px;font-size:9px;color:#b8bcc4;letter-spacing:-0.31px">eant toois neer fivo Ealling</div>
<div class="t" id="j2d" style="left:1193px;top:633.7px;font-size:9px;color:#b8bcc4;letter-spacing:-0.75px">cein</div>
<div class="a" style="left:1193px;top:651.4px;width:117px;height:1px;background:#2e323d"></div>

<div class="a" style="left:1139.5px;top:663px;width:43px;height:43px;border-radius:50%;background:#d9416e;border:2.2px solid #fbfbfb"></div>
<svg style="left:1149.5px;top:677px" width="23" height="15" viewBox="0 0 23 15"><rect x="1" y="2" width="21" height="11" rx="1" fill="#fff"/><path d="M3 5.5 H20 M3 9 H20 M6 3 V12 M10 3 V12 M14 3 V12 M18 3 V9" stroke="#d9416e" stroke-width="1"/></svg>
<div class="t m3" id="j3a" style="left:1193px;top:664.5px;font-size:10px;color:#f0f0f2;letter-spacing:-0.25px">Fcsaulfie</div>
<div class="t" id="j3b" style="left:1193px;top:680.2px;font-size:9px;color:#b8bcc4;letter-spacing:-0.33px">Eortiee fnerhest. Gadl cBirone</div>
<div class="t" id="j3c" style="left:1193px;top:691.5px;font-size:9px;color:#b8bcc4;letter-spacing:-0.36px">obdaynifrp senmbrdied fanerd</div>
<div class="t" id="j3d" style="left:1193px;top:702.4px;font-size:9px;color:#b8bcc4;letter-spacing:-0.52px">Enmrier Dnnspe.</div>
<div class="a" style="left:1193px;top:720.5px;width:117px;height:1px;background:#2e323d"></div>

<div class="a" style="left:1139.5px;top:730.5px;width:43px;height:43px;border-radius:50%;background:#4a6ae6;border:2.2px solid #fbfbfb"></div>
<div class="t b" style="left:1149px;top:741.5px;font-size:19px;letter-spacing:-1px;color:#fff">Ta</div>
<div class="t m3" id="j4a" style="left:1193px;top:734.6px;font-size:10px;color:#f0f0f2;letter-spacing:-0.44px">Baleno</div>
<div class="t" id="j4b" style="left:1193px;top:749.7px;font-size:9px;color:#b8bcc4;letter-spacing:-0.49px">Fincer.Eaye GnfBanjnacaal</div>


</div>
</body></html>
